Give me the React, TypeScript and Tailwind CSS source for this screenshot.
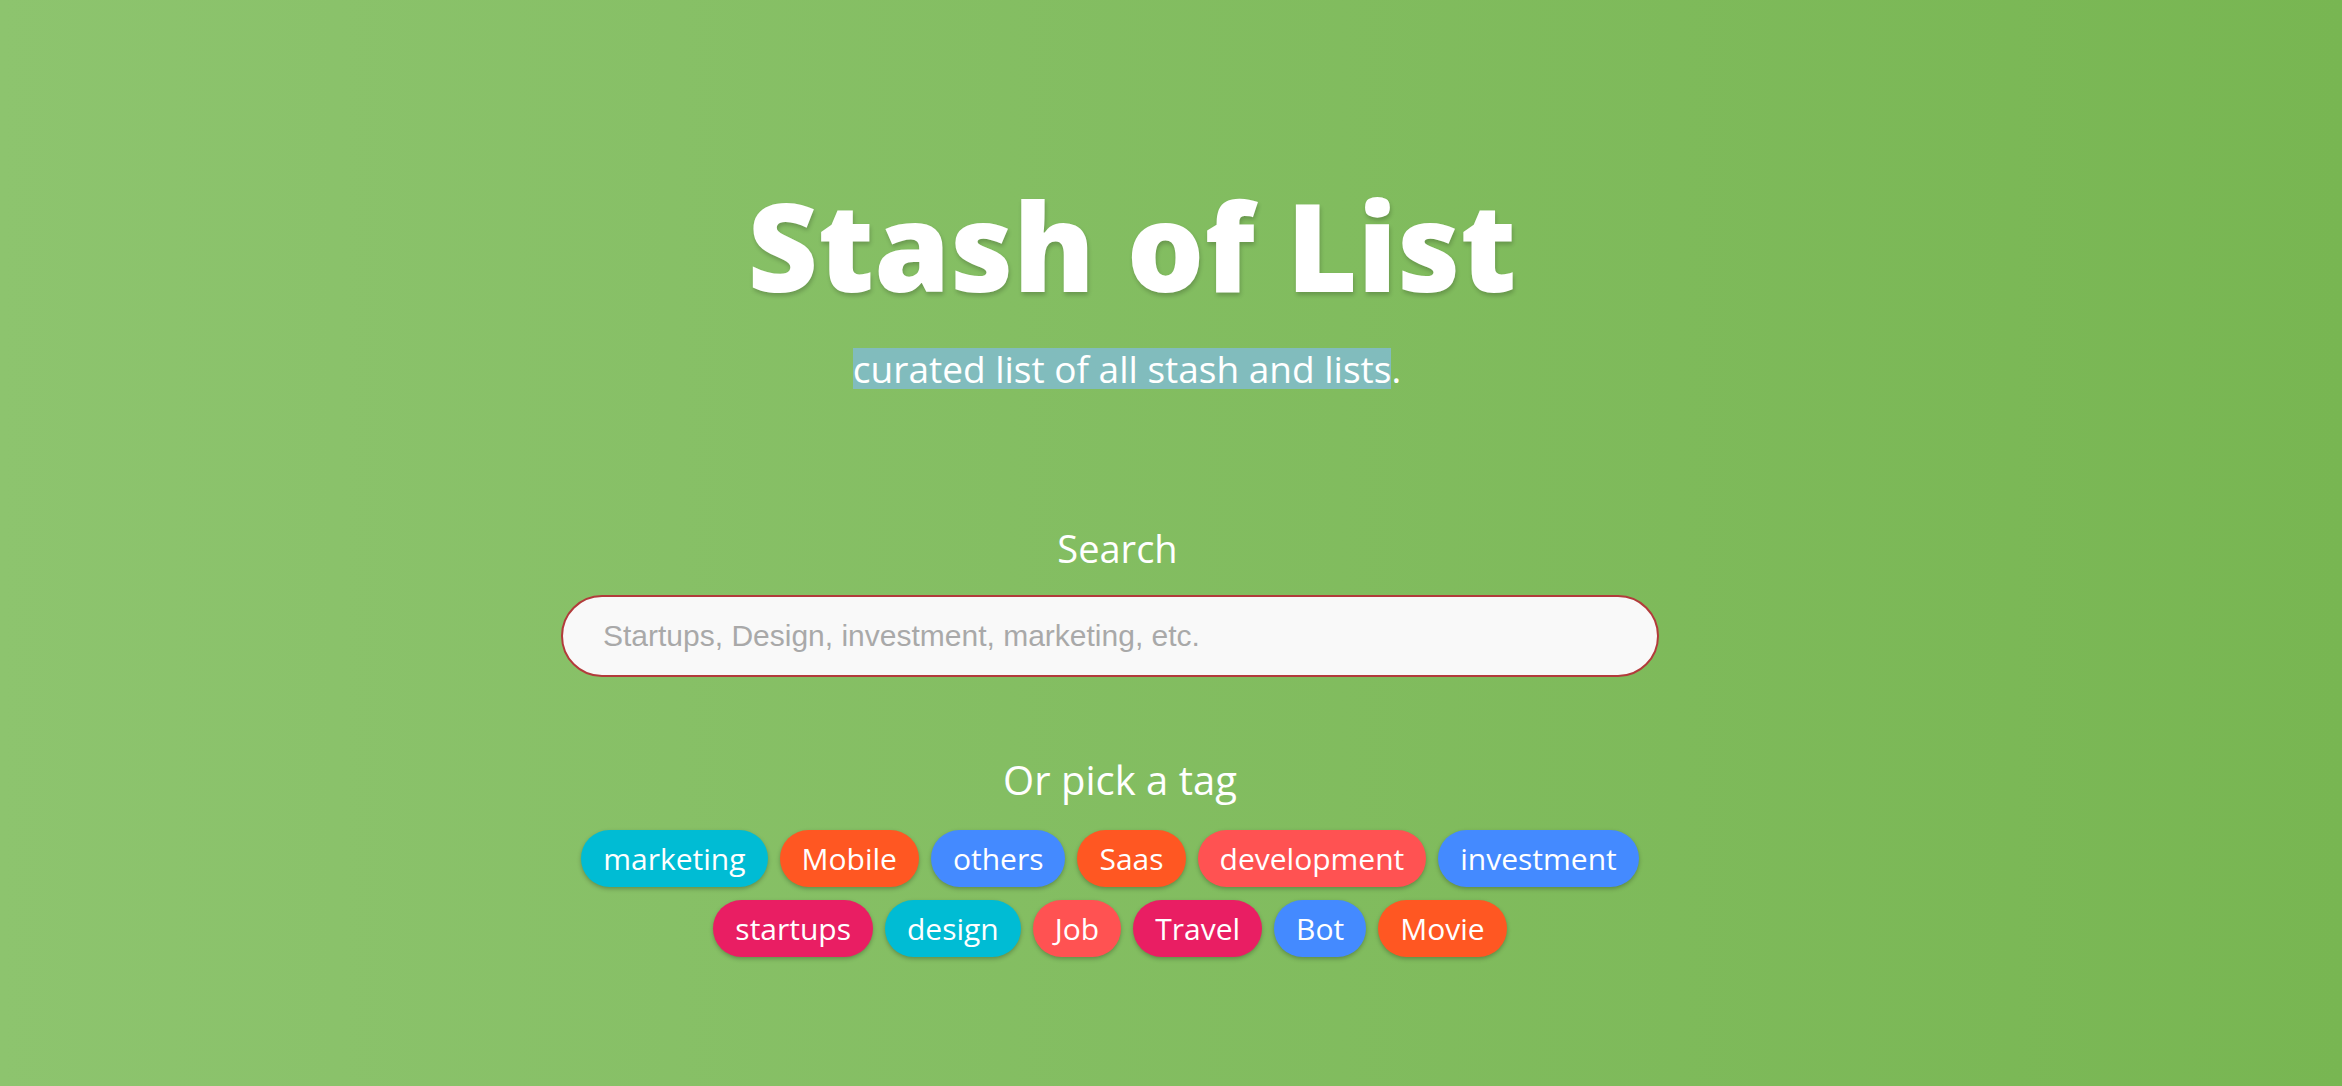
const tagRows = [
  [
    { name: "marketing", color: "bg-[#00bcd4]" },
    { name: "Mobile", color: "bg-[#ff5722]" },
    { name: "others", color: "bg-[#448aff]" },
    { name: "Saas", color: "bg-[#ff5722]" },
    { name: "development", color: "bg-[#ff5252]" },
    { name: "investment", color: "bg-[#448aff]" },
  ],
  [
    { name: "startups", color: "bg-[#e91e63]" },
    { name: "design", color: "bg-[#00bcd4]" },
    { name: "Job", color: "bg-[#ff5252]" },
    { name: "Travel", color: "bg-[#e91e63]" },
    { name: "Bot", color: "bg-[#448aff]" },
    { name: "Movie", color: "bg-[#ff5722]" },
  ],
];

function Tag({ name, color }: { name: string; color: string }) {
  return (
    <button
      className={`${color} flex h-[57px] items-center rounded-full px-[22px] text-[30px] text-white shadow-[0_2px_4px_rgba(0,0,0,0.25)]`}
    >
      {name}
    </button>
  );
}

export default function App() {
  return (
    <main className="min-h-screen w-full bg-linear-to-r from-[#8dc46e] to-[#78b652] font-['Open_Sans',sans-serif] text-white">
      <div className="flex flex-col items-center pr-[122px] pt-[184px]">
        <h1 className="pl-[44px] text-[122px] font-extrabold leading-none [text-shadow:1px_3px_4px_rgba(0,0,0,0.2)]">
          Stash of List
        </h1>
        <p className="mt-[42px] pl-[34px] text-[37px] leading-[41px]">
          <span className="inline-block bg-[#81bcbd] leading-[41px]">curated list of all stash and lists</span>.
        </p>

        <label className="mt-[140px] pl-[15px] text-[38px] leading-none">Search</label>
        <input
          type="text"
          placeholder="Startups, Design, investment, marketing, etc."
          className="mt-[28px] h-[82px] w-[1098px] rounded-full border-2 border-[#b23b3b] bg-[#f9f9f9] pl-[40px] font-['Liberation_Sans',sans-serif] text-[30px] text-gray-700 outline-none placeholder:text-[#a9a9a9]"
        />

        <h2 className="mt-[83px] pl-[20px] text-[40px] leading-none">Or pick a tag</h2>

        <div className="mt-[30px] flex flex-col items-center gap-[13px]">
          {tagRows.map((row, i) => (
            <div key={i} className="flex gap-[12px]">
              {row.map((t) => (
                <Tag key={t.name} name={t.name} color={t.color} />
              ))}
            </div>
          ))}
        </div>
      </div>
    </main>
  );
}
